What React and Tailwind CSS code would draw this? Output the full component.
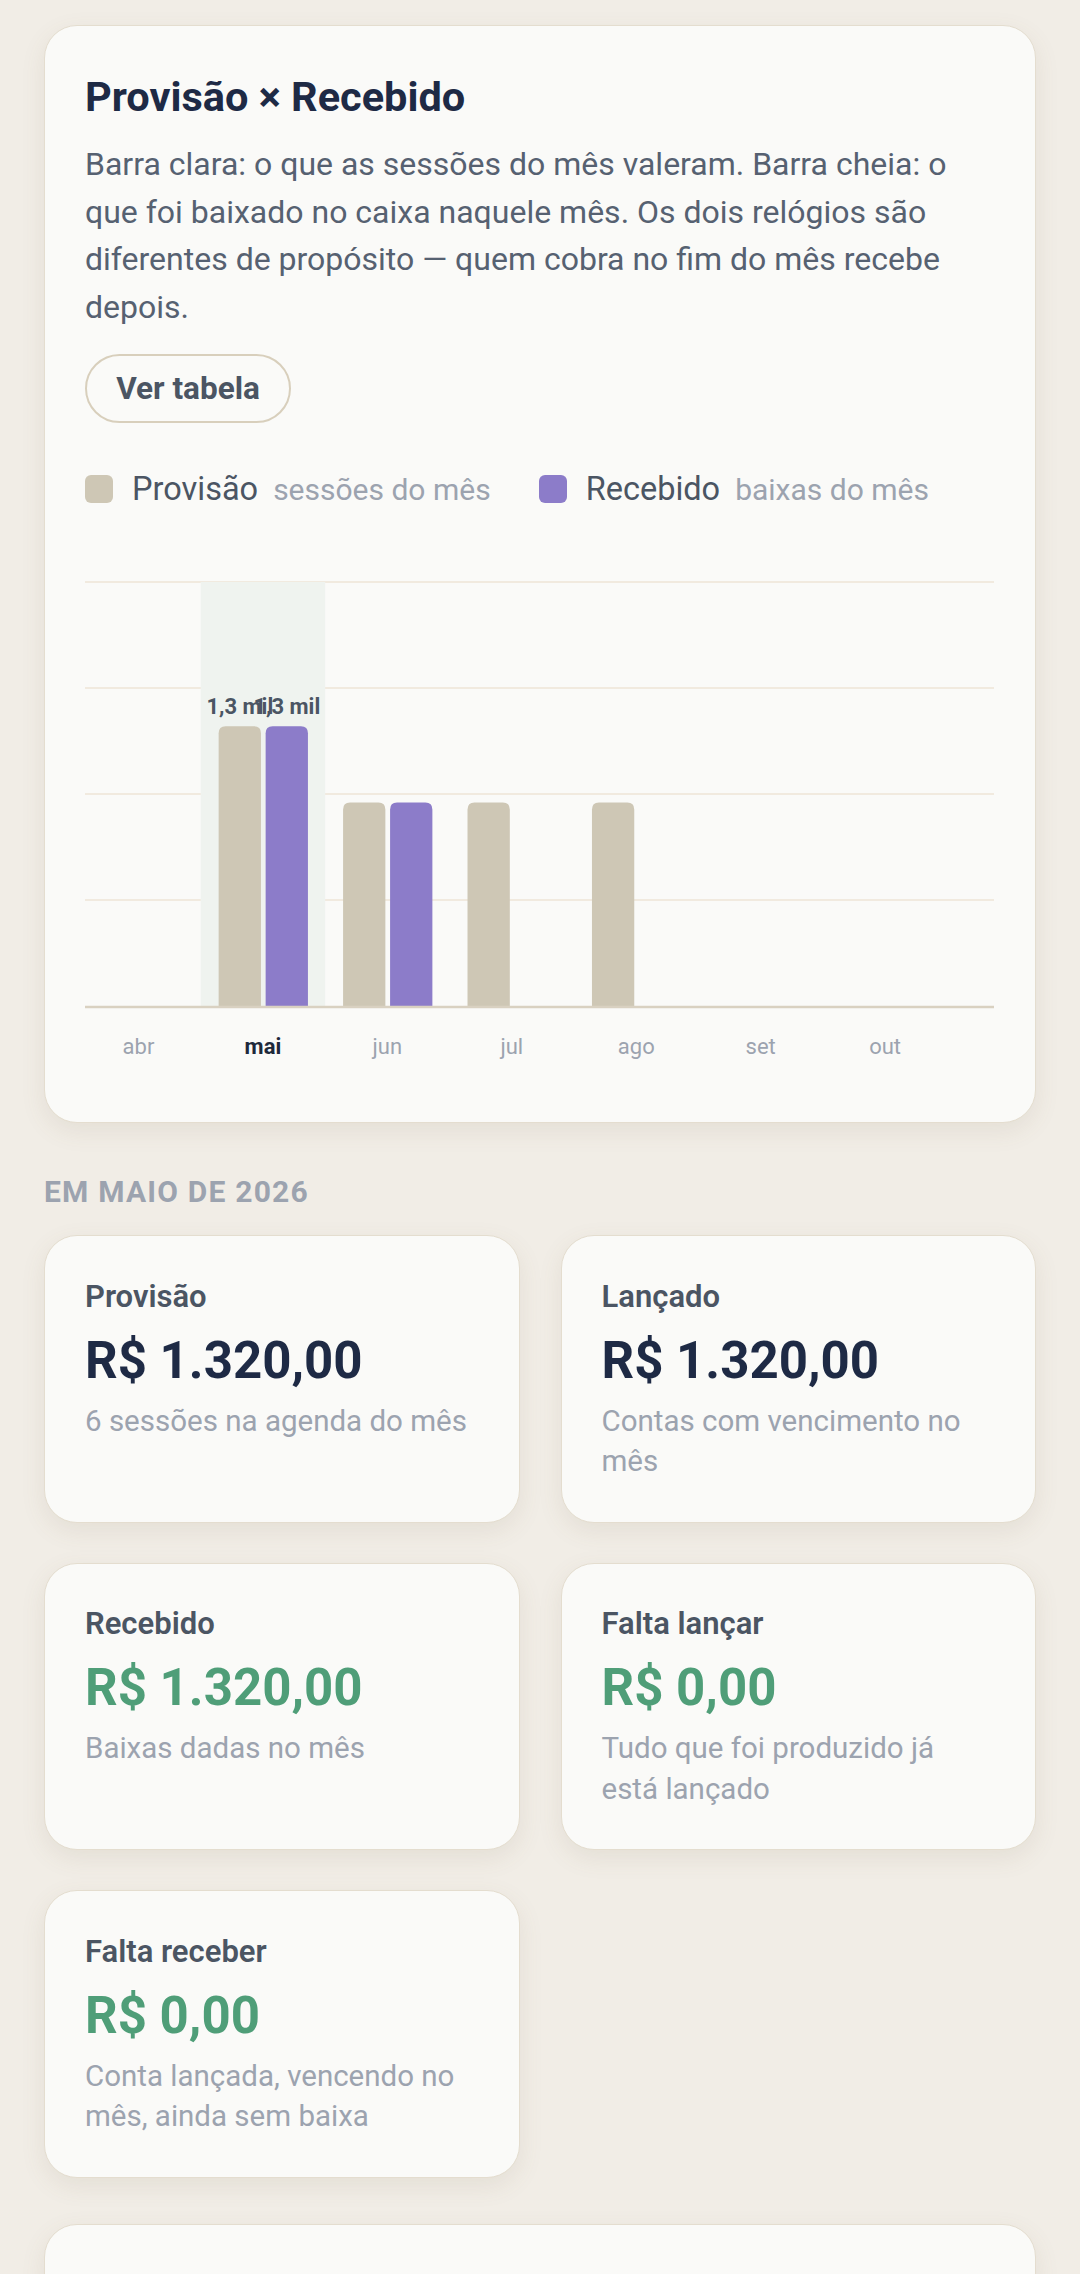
const months = [
  { m: "abr", p: 0, r: 0 },
  { m: "mai", p: 1320, r: 1320, active: true },
  { m: "jun", p: 960, r: 960 },
  { m: "jul", p: 960, r: 0 },
  { m: "ago", p: 960, r: 0 },
  { m: "set", p: 0, r: 0 },
  { m: "out", p: 0, r: 0 },
];

const stats = [
  { label: "Provisão", value: "R$ 1.320,00", sub: "6 sessões na agenda do mês", green: false },
  { label: "Lançado", value: "R$ 1.320,00", sub: "Contas com vencimento no mês", green: false },
  { label: "Recebido", value: "R$ 1.320,00", sub: "Baixas dadas no mês", green: true },
  { label: "Falta lançar", value: "R$ 0,00", sub: "Tudo que foi produzido já está lançado", green: true },
  { label: "Falta receber", value: "R$ 0,00", sub: "Conta lançada, vencendo no mês, ainda sem baixa", green: true },
];

// chart geometry, in px of the svg box
const BASE = 466;
const TOP = 42;
const MAX = 2000;
const COL = 124.44;
const FIRST = 53.5;
const BAR_W = 42.3;

function barPath(x, y, w, h, r) {
  return `M${x},${y + h} L${x},${y + r} Q${x},${y} ${x + r},${y} L${x + w - r},${y} Q${x + w},${y} ${x + w},${y + r} L${x + w},${y + h} Z`;
}

function Chart() {
  const toY = (v) => BASE - ((BASE - TOP) * v) / MAX;
  return (
    <svg width="909" height="539" viewBox="0 0 909 539" className="mt-[31px] block overflow-visible">
      {[0, 1, 2, 3].map((i) => (
        <line key={i} x1="0" x2="909" y1={TOP + i * 106} y2={TOP + i * 106} stroke="#f1eadf" strokeWidth="2" />
      ))}
      {months.map((d, i) => {
        const c = FIRST + i * COL;
        return d.active ? (
          <rect key={"h" + i} x={c - COL / 2} y={TOP} width={COL} height={BASE - TOP} fill="#eff3ef" />
        ) : null;
      })}
      {months.map((d, i) => {
        const c = FIRST + i * COL;
        const x1 = c - 44.3;
        const x2 = c + 2.7;
        return (
          <g key={"b" + i}>
            {d.p > 0 && <path d={barPath(x1, toY(d.p), BAR_W, BASE - toY(d.p), 7)} fill="#cec7b5" />}
            {d.r > 0 && <path d={barPath(x2, toY(d.r), BAR_W, BASE - toY(d.r), 7)} fill="#8c7cc9" />}
          </g>
        );
      })}
      <line x1="0" x2="909" y1={BASE + 1} y2={BASE + 1} stroke="#d9d1c1" strokeWidth="2.5" />
      {months.map((d, i) => {
        const c = FIRST + i * COL;
        if (!d.active) return null;
        return (
          <g key={"v" + i} fontSize="22" fontWeight="700" fill="#4b5563" textAnchor="middle">
            <text x={c - 44.3 + BAR_W / 2} y="174">1,3 mil</text>
            <text x={c + 2.7 + BAR_W / 2} y="174">1,3 mil</text>
          </g>
        );
      })}
      {months.map((d, i) => (
        <text
          key={"m" + i}
          x={FIRST + i * COL}
          y="514"
          fontSize="22"
          textAnchor="middle"
          fontWeight={d.active ? 700 : 400}
          fill={d.active ? "#1e293b" : "#9ca3af"}
        >
          {d.m}
        </text>
      ))}
    </svg>
  );
}

function StatCard({ label, value, sub, green }) {
  return (
    <div className="rounded-[33px] border-[1.5px] border-[#e4ddcf] bg-[#fafaf8] px-[40px] pt-[42.5px] pb-[40px] shadow-[0_8px_24px_rgba(120,100,70,0.10)]">
      <div className="text-[31px] leading-[36px] font-semibold text-[#4b5563]">{label}</div>
      <div className={`mt-[16px] text-[51px] leading-[60px] font-bold ${green ? "text-[#4f9e78]" : "text-[#1e2a45]"}`}>
        {value}
      </div>
      <div className="mt-[10px] pr-[8px] text-[29.5px] leading-[40.5px] text-[#9ca3af]">{sub}</div>
    </div>
  );
}

export default function App() {
  return (
    <div className="min-h-screen bg-[#f1ede6] px-[44px] pt-[25px] pb-[60px] font-[Roboto,sans-serif]">
      <div className="rounded-[33px] border-[1.5px] border-[#e4ddcf] bg-[#fafaf8] px-[40px] pt-[46px] pb-[42.5px] shadow-[0_8px_24px_rgba(120,100,70,0.10)]">
        <h2 className="text-[41.5px] leading-[50px] font-bold text-[#1e2a45]">Provisão × Recebido</h2>
        <p className="mt-[19px] text-[32px] leading-[47.5px] text-[#566171]">
          Barra clara: o que as sessões do mês valeram. Barra cheia: o que foi baixado no caixa naquele mês. Os dois
          relógios são diferentes de propósito — quem cobra no fim do mês recebe depois.
        </p>
        <button className="mt-[23px] flex h-[68.5px] w-[206px] items-center justify-center rounded-full border-2 border-[#d8cfbc] text-[31.5px] font-bold text-[#4b5563]">
          Ver tabela
        </button>
        <div className="mt-[46.5px] flex h-[40px] items-center">
          <span className="h-[28px] w-[28px] rounded-[6px] bg-[#cec7b5]" />
          <span className="ml-[19px] text-[32.5px] text-[#4b5563]">Provisão</span>
          <span className="ml-[15px] text-[30px] text-[#9ca3af]">sessões do mês</span>
          <span className="ml-[48px] h-[28px] w-[28px] rounded-[6px] bg-[#8c7cc9]" />
          <span className="ml-[19px] text-[32.5px] text-[#4b5563]">Recebido</span>
          <span className="ml-[15px] text-[30px] text-[#9ca3af]">baixas do mês</span>
        </div>
        <Chart />
      </div>

      <div className="mt-[51px] text-[30px] leading-[36px] font-bold uppercase tracking-[0.04em] text-[#9ca3af]">
        Em maio de 2026
      </div>

      <div className="mt-[25.5px] grid grid-cols-2 gap-x-[41px] gap-y-[40px]">
        {stats.map((s) => (
          <StatCard key={s.label} {...s} />
        ))}
      </div>

      <div className="mt-[46px] h-[240px] rounded-[33px] border-[1.5px] border-[#e4ddcf] bg-[#fafaf8] shadow-[0_8px_24px_rgba(120,100,70,0.10)]" />
    </div>
  );
}
